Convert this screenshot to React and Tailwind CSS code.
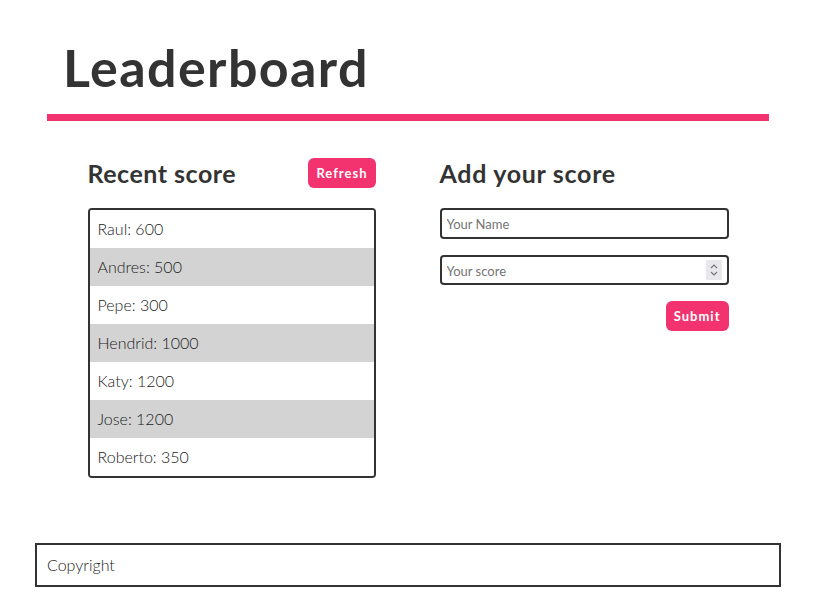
import React from "react";

const scores = [
  { name: "Raul", score: 600 },
  { name: "Andres", score: 500 },
  { name: "Pepe", score: 300 },
  { name: "Hendrid", score: 1000 },
  { name: "Katy", score: 1200 },
  { name: "Jose", score: 1200 },
  { name: "Roberto", score: 350 },
];

export default function App() {
  return (
    <div className="w-[816px] h-[600px] bg-white text-[#333] font-['Lato','Noto_Sans',sans-serif] overflow-hidden">
      {/* HEADER */}
      <header className="pt-[37px] px-[47px]">
        <h1 className="pl-[16px] h-[60px] flex items-center text-[52px] font-bold leading-none tracking-[1.4px]">
          Leaderboard
        </h1>
        <div className="mt-[17px] h-[7px] bg-[#f2336f]" />
      </header>

      {/* MAIN */}
      <main className="flex justify-center gap-[64px] pt-[37px]">
        <section className="w-[288px]">
          <div className="flex items-center justify-between h-[30px]">
            <h2 className="text-[25px] font-bold tracking-[0.5px] pt-[1px]">Recent score</h2>
            <button className="h-[30px] px-[8px] pt-[2px] rounded-[6px] bg-[#f2336f] text-white text-[13px] font-bold tracking-[1px]">
              Refresh
            </button>
          </div>
          <ul className="mt-[20px] border-2 border-[#333] rounded-[4px] overflow-hidden">
            {scores.map((s, i) => (
              <li
                key={i}
                className={`h-[38px] flex items-center pl-[8px] text-[16px] font-light text-[#222] ${
                  i % 2 === 1 ? "bg-[#d3d3d3]" : "bg-white"
                }`}
              >
                {s.name}: {s.score}
              </li>
            ))}
          </ul>
        </section>

        <section className="w-[289px]">
          <h2 className="h-[30px] flex items-center pt-[1px] text-[25px] font-bold tracking-[0.7px]">Add your score</h2>
          <form className="mt-[20px] flex flex-col">
            <input
              type="text"
              placeholder="Your Name"
              className="h-[31px] border-2 border-[#333] rounded-[4px] px-[5px] text-[13px] placeholder:text-[#757575] outline-none"
            />
            <div className="relative mt-[16px]">
              <input
                type="text"
                placeholder="Your score"
                className="w-full h-[30px] border-2 border-[#333] rounded-[4px] px-[5px] pt-[1px] text-[13px] placeholder:text-[#757575] outline-none"
              />
              <div className="absolute right-[7px] top-[5px] w-[16px] h-[20px] bg-[#e8e8ec] flex items-center justify-center">
                <svg width="10" height="16" viewBox="0 0 10 16" fill="none" stroke="#777" strokeWidth="1.2">
                  <path d="M2 6 L5 3 L8 6" />
                  <path d="M2 10 L5 13 L8 10" />
                </svg>
              </div>
            </div>
            <div className="flex justify-end mt-[16px]">
              <button
                type="button"
                className="h-[30px] px-[8px] pt-[2px] rounded-[6px] bg-[#f2336f] text-white text-[13px] font-bold tracking-[1px]"
              >
                Submit
              </button>
            </div>
          </form>
        </section>
      </main>

      {/* FOOTER */}
      <footer className="mx-[35px] mt-[65px] h-[44px] border-2 border-[#333] flex items-center pl-[10px] text-[16px] font-light text-[#222]">
        Copyright
      </footer>
    </div>
  );
}
